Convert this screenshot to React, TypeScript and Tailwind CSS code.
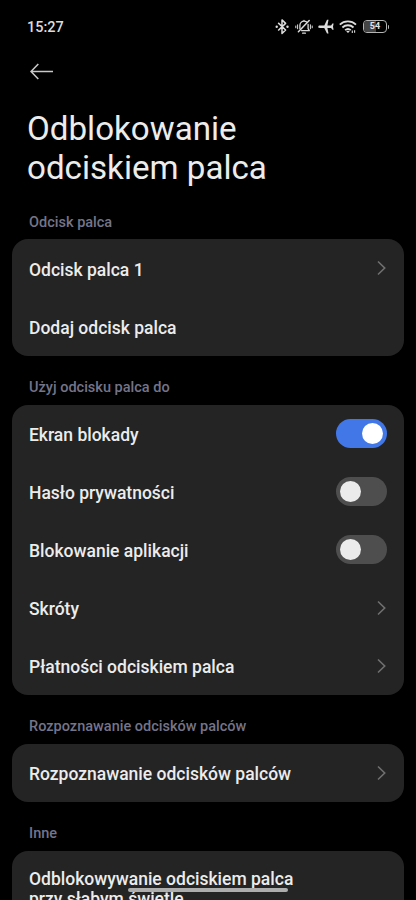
import React, { useState } from 'react';

interface SettingRow {
  /** Unique identifier for the row */
  id: string;
  /** Display label */
  label: string;
  /** Control on the right side of the row */
  control?: 'chevron' | 'switch';
}

interface SettingSection {
  title: string;
  rows: SettingRow[];
}

const SECTIONS: SettingSection[] = [
  {
    title: 'Odcisk palca',
    rows: [
      { id: 'finger-1', label: 'Odcisk palca 1', control: 'chevron' },
      { id: 'add', label: 'Dodaj odcisk palca' },
    ],
  },
  {
    title: 'Użyj odcisku palca do',
    rows: [
      { id: 'lock-screen', label: 'Ekran blokady', control: 'switch' },
      { id: 'privacy', label: 'Hasło prywatności', control: 'switch' },
      { id: 'app-lock', label: 'Blokowanie aplikacji', control: 'switch' },
      { id: 'shortcuts', label: 'Skróty', control: 'chevron' },
      { id: 'payments', label: 'Płatności odciskiem palca', control: 'chevron' },
    ],
  },
  {
    title: 'Rozpoznawanie odcisków palców',
    rows: [{ id: 'recognition', label: 'Rozpoznawanie odcisków palców', control: 'chevron' }],
  },
];

const BluetoothIcon = () => (
  <svg width="14" height="16" viewBox="0 0 14 16" fill="none" stroke="currentColor" strokeWidth="1.5" strokeLinejoin="round" aria-hidden="true">
    <path d="M3.2 3.9 10.6 11 7 14.500V.9l3.600 3.500-7.400 7.100" />
    <circle cx="1.7" cy="7.700" r="1.200" fill="currentColor" stroke="none" />
    <circle cx="12.5" cy="7.700" r="1.200" fill="currentColor" stroke="none" />
  </svg>
);

const BellOffIcon = () => (
  <svg width="18" height="16" viewBox="0 0 18 16" fill="none" stroke="currentColor" strokeWidth="1.3" strokeLinecap="round" strokeLinejoin="round" aria-hidden="true">
    <path d="M4.900 9.500V6.300A4.100 4.100 0 0 1 9 2.200c1 0 1.900.3 2.600.9M13.100 5.500v4.200l1.200 2H6.600M9 2V1.300" />
    <path d="M3.400 12.800 14.200 1.600" strokeWidth="1.5" />
    <path d="M7.600 14.200h2.800" />
    <path d="M2.600 5.800v4M.8 7v1.800M15.400 5.800v4M17.200 7v1.800" strokeWidth="1" />
  </svg>
);

const AirplaneIcon = () => (
  <svg width="16" height="16" viewBox="0 0 16 16" fill="currentColor" aria-hidden="true">
    <path d="M.3 7.700c0-.8.6-1.200 1.400-1.200h4.600L9 .8h1.500L9.400 6.500h3.700l1.300-1.900h1.200l-.6 3.100.6 3.100h-1.200l-1.300-1.900H9.400l1.100 5.700H9L6.300 8.900H1.700C.9 8.900.3 8.500.3 7.700Z" />
  </svg>
);

const WifiIcon = () => (
  <svg width="18" height="14" viewBox="0 0 18 14" fill="none" stroke="currentColor" strokeWidth="1.8" aria-hidden="true">
    <path d="M.8 4.600c4.600-4.300 11.600-4.300 16.200 0" />
    <path d="M3.400 7.500c3.200-3 7.900-3 11.100 0" />
    <path d="M6.100 10.200c1.700-1.500 4-1.500 5.700 0" />
    <path d="M7.200 11.300 9 13.100l1.800-1.800c-1-.8-2.600-.8-3.600 0Z" fill="currentColor" stroke="none" />
    <path d="M13.300 13v-2.400M15.600 10.200v2.600" strokeWidth="1.1" />
  </svg>
);

const Battery = ({ level }: { level: number }) => (
  <div className="flex items-center">
    <div className="relative flex h-[13px] w-[24px] items-center justify-center overflow-hidden rounded-[4px] border border-[#b4b4b4]">
      <div className="absolute inset-y-0 left-0 bg-[#454545]" style={{ width: `${level}%` }} />
      <span className="relative text-[9px] leading-none font-bold text-[#e4e4e4]">{level}</span>
    </div>
    <div className="ml-px h-1 w-px rounded-r bg-[#b4b4b4]" />
  </div>
);

const StatusBar = () => (
  <div className="flex h-[53px] items-center pr-[27px] pl-[27px] text-[#dcdcdc]">
    <span className="pt-[2px] text-[14.500px] font-medium">15:27</span>
    <div className="ml-auto flex items-center">
      <BluetoothIcon />
      <div className="ml-[6px]"><BellOffIcon /></div>
      <div className="ml-[5px]"><AirplaneIcon /></div>
      <div className="ml-[5px]"><WifiIcon /></div>
      <div className="ml-[6px]"><Battery level={54} /></div>
    </div>
  </div>
);

const Chevron = () => (
  <svg className="mr-px text-[#707070]" width="9" height="16" viewBox="0 0 9 16" fill="none" stroke="currentColor" strokeWidth="1.6" aria-hidden="true">
    <path d="m1 1.500 6.700 6.500L1 14.500" />
  </svg>
);

const Switch = ({ label, checked, onChange }: { label: string; checked: boolean; onChange: () => void }) => (
  <button
    role="switch"
    aria-checked={checked}
    aria-label={label}
    onClick={onChange}
    className={`flex h-[29px] w-[51px] items-center rounded-full px-1 transition-colors duration-200 ${
      checked ? 'justify-end bg-[#4277e8]' : 'justify-start bg-[#4e4e4e]'
    }`}
  >
    <span className={`size-[21px] rounded-full ${checked ? 'bg-white' : 'bg-[#ebebeb]'}`} />
  </button>
);

const SectionTitle = ({ children }: { children: React.ReactNode }) => (
  <h2 className="flex h-[49px] items-center pt-[15.500px] pl-[16.700px] text-[14.500px] leading-5 font-medium text-[#74748a]">
    {children}
  </h2>
);

export default function App() {
  const [enabled, setEnabled] = useState<Record<string, boolean>>({ 'lock-screen': true });

  const toggle = (id: string) => setEnabled(prev => ({ ...prev, [id]: !prev[id] }));

  return (
    <div className="relative h-[900px] w-[416px] overflow-hidden bg-black font-[Roboto,sans-serif] text-[#ececec]">
      <StatusBar />

      <header className="pl-[27px]">
        <button aria-label="Wstecz" className="mt-[10px] ml-[3px] block text-[#c8c8c8]">
          <svg width="24" height="17" viewBox="0 0 24 17" fill="none" stroke="currentColor" strokeWidth="1.6">
            <path d="M23 8.500H1M8.300 1 1 8.500 8.300 16" />
          </svg>
        </button>
        <h1 className="mt-[29px] text-[33.150px] leading-[39px] font-normal">
          Odblokowanie
          <br />
          odciskiem palca
        </h1>
      </header>

      <main className="px-[12.400px] pt-[3.400px]">
        {SECTIONS.map(section => (
          <section key={section.title}>
            <SectionTitle>{section.title}</SectionTitle>
            <ul className="rounded-[16px] bg-[#242424]">
              {section.rows.map(row => (
                <li key={row.id} className="flex h-[58.100px] items-center justify-between px-[16.600px]">
                  <span className="pt-[2.500px] text-[17.500px] font-medium">{row.label}</span>
                  {row.control === 'chevron' && <Chevron />}
                  {row.control === 'switch' && (
                    <Switch label={row.label} checked={!!enabled[row.id]} onChange={() => toggle(row.id)} />
                  )}
                </li>
              ))}
            </ul>
          </section>
        ))}

        <section>
          <SectionTitle>Inne</SectionTitle>
          <div className="rounded-t-[16px] bg-[#242424] px-[16.600px] pt-[18px] pb-5 text-[17.500px] leading-[20px] font-medium">
            Odblokowywanie odciskiem palca
            <br />
            przy słabym świetle
          </div>
        </section>
      </main>

      {/* Gesture navigation handle */}
      <div className="absolute bottom-[8px] left-[128px] h-[4px] w-[160px] rounded-full bg-[#adadad]" />
    </div>
  );
}
